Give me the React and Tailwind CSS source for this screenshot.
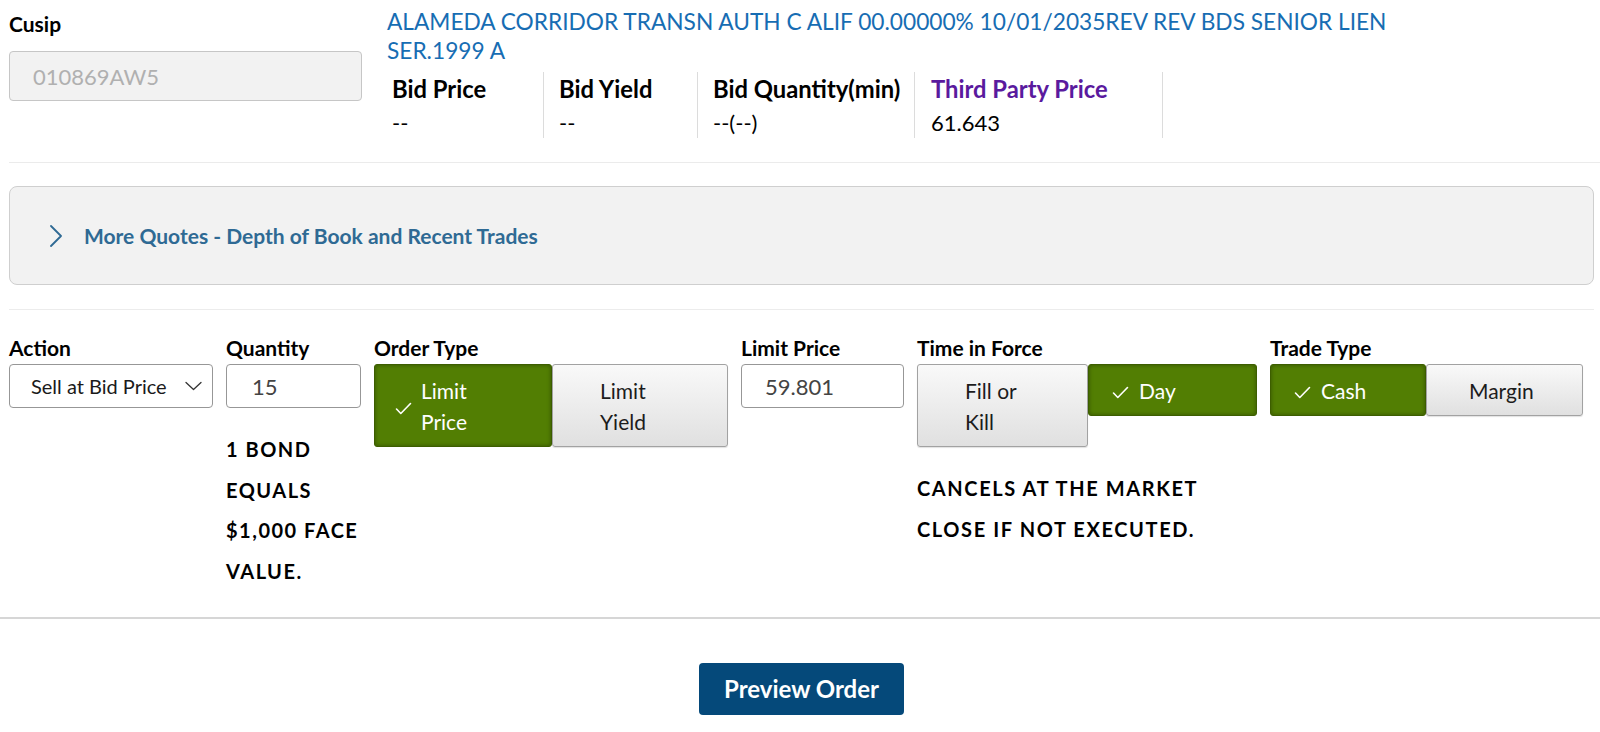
import React from 'react';
import clsx from 'clsx';

// petit check blanc des boutons sélectionnés
function CheckMark() {
  return (
    <svg width="17" height="13" viewBox="0 0 17 13" fill="none">
      <path d="M1.5 7 L5.8 11.5 L15.5 1.5" stroke="white" strokeWidth="1.6" strokeLinecap="round" strokeLinejoin="round" />
    </svg>
  );
}

function ToggleButton({ lines, checked, className, pad = 'w-[27px]', lead = 'pl-[20px]' }) {
  return (
    <button
      type="button"
      className={clsx(
        'flex items-center border rounded-[3px] pr-2 pt-[10px] pb-[9px] text-[21px] leading-[31px] text-left',
        lead,
        checked
          ? 'bg-[#527e03] border-[#3d5e00] text-white shadow-[inset_0_0_4px_rgba(0,0,0,0.35)]'
          : 'bg-linear-to-b from-[#f9f9f9] to-[#e0e0e0] border-[#a2a2a2] text-[#1c1c1c] shadow-[0_1px_1px_rgba(0,0,0,0.12)]',
        className
      )}
    >
      <span className={clsx('shrink-0 flex items-center pt-[4px]', pad)}>{checked && <CheckMark />}</span>
      <span>
        {lines.map((l) => (
          <span key={l} className="block">{l}</span>
        ))}
      </span>
    </button>
  );
}

function FieldLabel({ children }) {
  return <div className="text-[21px] font-bold leading-[24px] text-black">{children}</div>;
}

const bidColumns = [
  { label: 'Bid Price', value: '--', width: 'w-[159px] pl-[7px]' },
  { label: 'Bid Yield', value: '--', width: 'w-[154px] pl-[15px]' },
  { label: 'Bid Quantity(min)', value: '--(--)', width: 'w-[217px] pl-[15px]' },
  { label: 'Third Party Price', value: '61.643', width: 'w-[248px] pl-[16px]', purple: true },
];

export default function App() {
  return (
    <div className="min-h-screen w-full bg-white font-['Lato',sans-serif] text-black">
      <div className="pl-[9px]">
        {/* en-tête : cusip + description + cotations */}
        <div className="flex h-[163px] border-b border-[#ebebeb]">
          <div className="w-[376px] shrink-0 pt-[12px]">
            <FieldLabel>Cusip</FieldLabel>
            <div className="mt-[15px] w-[353px] h-[50px] rounded-[4px] border border-[#c6c6c6] bg-[#f2f2f2] pl-[23px] flex items-center text-[22px] text-[#b0b0b0]">
              010869AW5
            </div>
          </div>
          <div className="flex-1 pt-[8px]">
            <div className="pl-[2px] text-[22.7px] leading-[28.5px] text-[#176db3]">
              ALAMEDA CORRIDOR TRANSN AUTH C ALIF 00.00000% 10/01/2035REV REV BDS SENIOR LIEN
              <br />
              SER.1999 A
            </div>
            <div className="mt-[7px] flex">
              {bidColumns.map((c) => (
                <div key={c.label} className={clsx('h-[66px] border-r border-[#dcdcdc] pt-[3px]', c.width)}>
                  <div className={clsx('text-[23.8px] font-bold leading-[28px]', c.purple ? 'text-[#5a1a9e]' : 'text-black')}>
                    {c.label}
                  </div>
                  <div className="mt-[5px] text-[22px] leading-[29px] text-black">{c.value}</div>
                </div>
              ))}
            </div>
          </div>
        </div>

        {/* plus de cotations */}
        <div className="mt-[23px] mr-[6px] h-[99px] rounded-[8px] border border-[#cfcfcf] bg-[#f2f2f2] flex items-center pl-[40px]">
          <svg width="12" height="22" viewBox="0 0 12 22" fill="none">
            <path d="M1 1 L11 11 L1 21" stroke="#2f6a94" strokeWidth="1.8" strokeLinecap="round" strokeLinejoin="round" />
          </svg>
          <span className="ml-[22px] text-[21px] font-bold text-[#2f6a94]">More Quotes - Depth of Book and Recent Trades</span>
        </div>

        <div className="mt-[24px] mr-[6px] h-px bg-[#ececec]" />

        {/* ligne d'ordre */}
        <div className="mt-[26px] flex items-start gap-[13px]">
          <div className="w-[204px]">
            <FieldLabel>Action</FieldLabel>
            <div className="mt-[4px] h-[44px] rounded-[4px] border border-[#979797] flex items-center justify-between pl-[21px] pr-[10px] text-[20px] text-[#1a1a1a]">
              <span>Sell at Bid Price</span>
              <svg width="17" height="10" viewBox="0 0 17 10" fill="none">
                <path d="M1 1.5 L8.5 8.5 L16 1.5" stroke="#333" strokeWidth="1.3" strokeLinecap="round" strokeLinejoin="round" />
              </svg>
            </div>
          </div>

          <div className="w-[135px]">
            <FieldLabel>Quantity</FieldLabel>
            <div className="mt-[4px] h-[44px] rounded-[4px] border border-[#979797] flex items-center pl-[25px] text-[22px] text-[#444]">15</div>
            <div className="mt-[21px] text-[20px] font-bold uppercase tracking-[1.5px] leading-[40.6px] text-black">
              1 Bond equals $1,000 face value.
            </div>
          </div>

          <div className="w-[354px]">
            <FieldLabel>Order Type</FieldLabel>
            <div className="mt-[4px] flex">
              <ToggleButton className="w-[178px]" checked pad="w-[26px]" lines={['Limit', 'Price']} />
              <ToggleButton className="w-[176px]" lines={['Limit', 'Yield']} />
            </div>
          </div>

          <div className="w-[163px]">
            <FieldLabel>Limit Price</FieldLabel>
            <div className="mt-[4px] h-[44px] rounded-[4px] border border-[#979797] flex items-center pl-[23px] text-[22px] text-[#444]">59.801</div>
          </div>

          <div className="w-[340px]">
            <FieldLabel>Time in Force</FieldLabel>
            <div className="mt-[4px] flex items-start">
              <ToggleButton className="w-[171px]" lines={['Fill or', 'Kill']} />
              <ToggleButton className="w-[169px]" checked lead="pl-[23px]" lines={['Day']} />
            </div>
            <div className="mt-[21px] text-[20px] font-bold uppercase tracking-[1.6px] leading-[40.6px] text-black">
              Cancels at the market close if not executed.
            </div>
          </div>

          <div className="w-[313px]">
            <FieldLabel>Trade Type</FieldLabel>
            <div className="mt-[4px] flex items-start">
              <ToggleButton className="w-[156px]" checked lead="pl-[23px]" lines={['Cash']} />
              <ToggleButton className="w-[157px]" pad="w-[22px]" lines={['Margin']} />
            </div>
          </div>
        </div>
      </div>

      <div className="mt-[26px] h-[2px] bg-[#d6d6d6]" />

      <div className="mt-[44px] flex justify-center pl-[3px]">
        <button type="button" className="w-[205px] h-[52px] rounded-[4px] bg-[#05497a] text-white text-[24px] font-bold">
          Preview Order
        </button>
      </div>
    </div>
  );
}
